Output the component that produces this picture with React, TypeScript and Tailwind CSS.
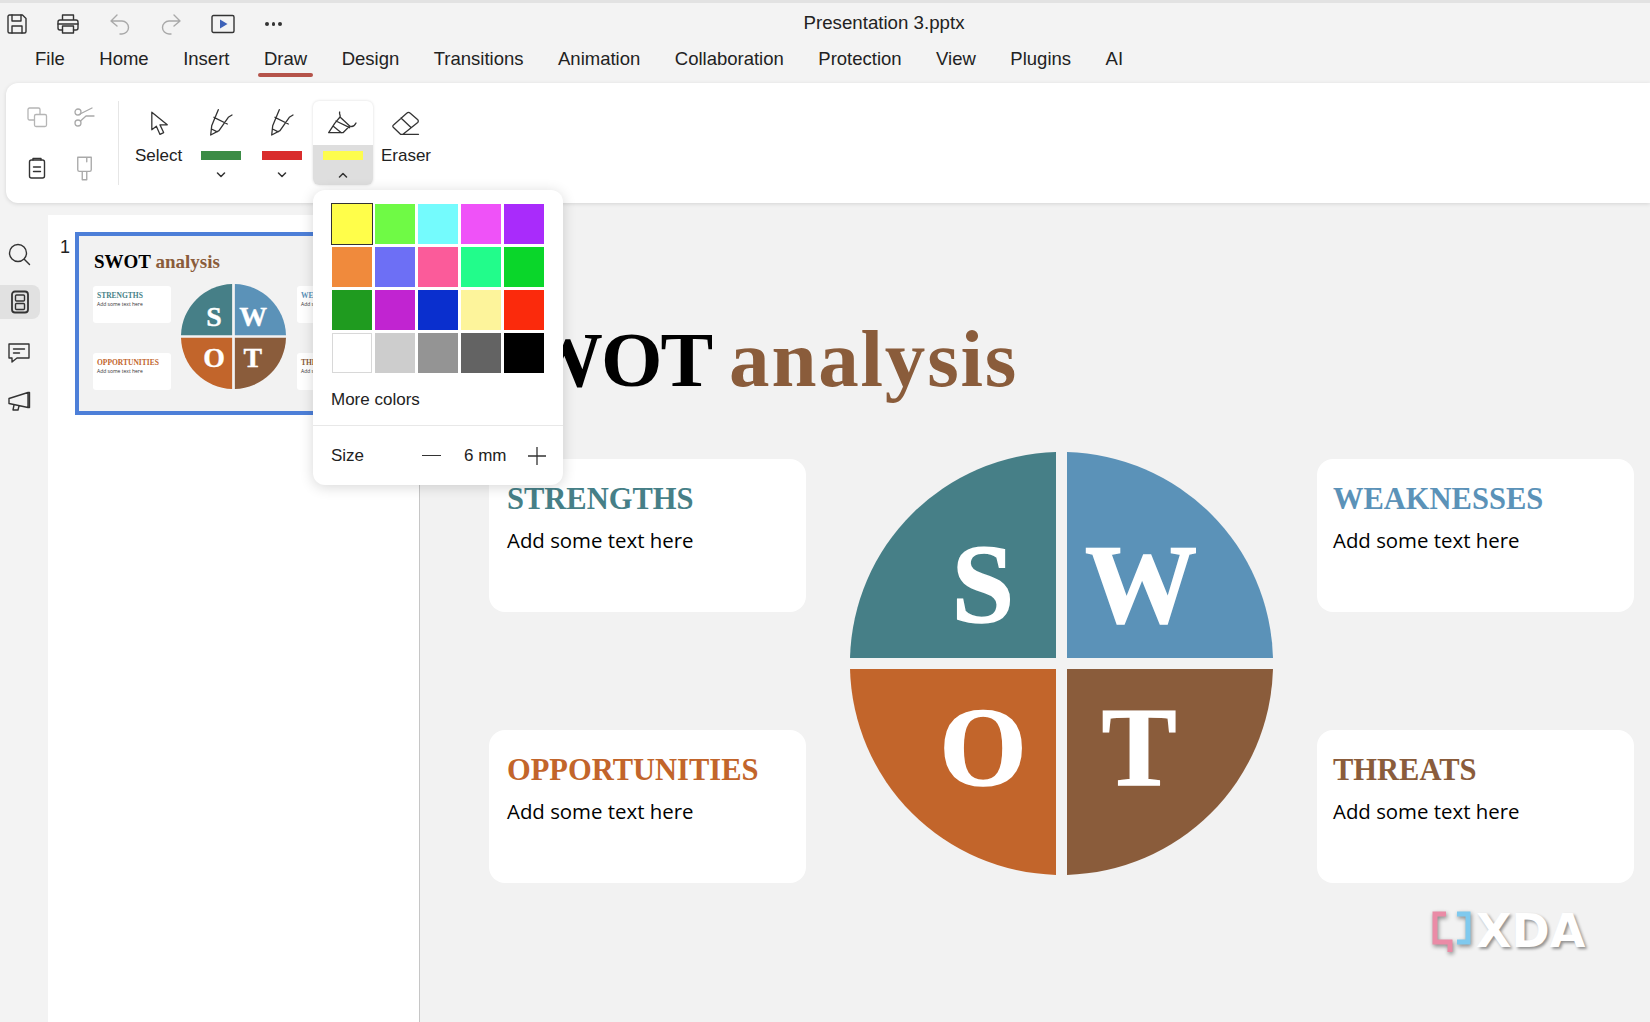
import React from "react";

const SANS = "font-['Liberation_Sans',Arial,sans-serif]";
const tabs = ["File","Home","Insert","Draw","Design","Transitions","Animation","Collaboration","Protection","View","Plugins","AI"];
const swatches = [
  "bg-[#fffe4a]","bg-[#6ffa45]","bg-[#74fbfd]","bg-[#ef52f8]","bg-[#a92bfb]",
  "bg-[#f08a3c]","bg-[#6d6ff5]","bg-[#fb5b9a]","bg-[#22fc8b]","bg-[#0ad62a]",
  "bg-[#1f9b1f]","bg-[#c124d1]","bg-[#0a2fce]","bg-[#fdf49b]","bg-[#fb2a0c]",
  "bg-[#ffffff]","bg-[#cdcdcd]","bg-[#949494]","bg-[#636363]","bg-[#000000]",
];

function I({ size = 24, color = "#333", sw = 1.4, children }: { size?: number; color?: string; sw?: number; children: React.ReactNode }) {
  return (
    <svg width={size} height={size} viewBox="0 0 24 24" fill="none" stroke={color} strokeWidth={sw} strokeLinecap="round" strokeLinejoin="round" className="shrink-0">
      {children}
    </svg>
  );
}
const SaveI = () => <I><path d="M3 4.500A1.500 1.500 0 0 1 4.500 3h13L21 6.500v13a1.500 1.500 0 0 1-1.500 1.500h-15A1.500 1.500 0 0 1 3 19.500z"/><path d="M7 3v6h9V3M7 21v-7h10v7"/></I>;
const PrintI = () => <I><path d="M6.500 8V3h11v5M6.500 18H4a2 2 0 0 1-2-2v-6a2 2 0 0 1 2-2h16a2 2 0 0 1 2 2v6a2 2 0 0 1-2 2h-2.500"/><path d="M6.500 14h11v7h-11zM2 12h20"/></I>;
const UndoI = () => <I color="#a9a9a9"><path d="M9 3 3 9l6 5M3 9h11a6.500 6.500 0 0 1 6.500 6.500A6.500 6.500 0 0 1 14 22h-2"/></I>;
const RedoI = () => <I color="#a9a9a9"><path d="m15 3 6 6-6 5M21 9H10a6.500 6.500 0 0 0-6.500 6.500A6.500 6.500 0 0 0 10 22h2"/></I>;
const PlayI = () => (
  <svg width="24" height="20" viewBox="0 0 24 20" fill="none" className="shrink-0">
    <rect x="1" y="1.500" width="22" height="17" rx="1.500" stroke="#333" strokeWidth="1.400" />
    <path d="M9 5.500 16.500 10 9 14.500z" fill="#3d62b8" />
  </svg>
);
const PenI = () => (
  <svg width="24" height="28" viewBox="0 0 24 28" fill="none" stroke="#333" strokeWidth="1.300" strokeLinejoin="round" strokeLinecap="round" className="shrink-0">
    <path d="M9.300 .7 2.700 16.700 1.700 26 10 21.700 19.300 8.300 23 6M5 8.300 18.300 15M2.500 20 8.300 22.800"/>
  </svg>
);
const HighlightI = () => (
  <svg width="30" height="24" viewBox="0 0 30 24" fill="none" stroke="#333" strokeWidth="1.300" strokeLinejoin="round" strokeLinecap="round" className="shrink-0">
    <path d="M11.700 1c-.8 2 1.200 3.500 .3 5L6.700 12.300 .7 21.700H15L21.700 15c2 1 4.500 .5 6.300-3M12 6l9.700 9M8 10l13.700 6.700M5 15l8.300 6.700"/>
  </svg>
);
const EraserI = () => (
  <svg width="28" height="25" viewBox="0 0 28 25" fill="none" stroke="#333" strokeWidth="1.300" strokeLinejoin="round" strokeLinecap="round" className="shrink-0">
    <path d="M15 2a2 2 0 0 1 3 0l7.500 6.500a2 2 0 0 1 .2 3L11 23.300H8.500L1.500 16.500a1.500 1.500 0 0 1 0-2.500zM9 7l10 9.500M9 23.300H26.500"/>
  </svg>
);
const Chev = ({ up = false }: { up?: boolean }) => (
  <svg width="10" height="6" viewBox="0 0 10 6" fill="none" stroke="#333" strokeWidth="1.500" strokeLinecap="round" strokeLinejoin="round">
    <path d={up ? "M1.500 5 5 1.500 8.500 5" : "M1.500 1 5 4.500 8.500 1"} />
  </svg>
);

function PenTool({ bar, icon }: { bar: string; icon: React.ReactNode }) {
  return (
    <div className="w-[60px] h-[84px] flex flex-col items-center">
      <div className="h-[44px] flex items-center justify-center">{icon}</div>
      <div className={`mt-[6px] w-[40px] h-[9px] ${bar}`} />
      <div className="mt-[12px]"><Chev /></div>
    </div>
  );
}

function Card({ title, color, pad = "pl-[18px]" }: { title: string; color: string; pad?: string }) {
  return (
    <div className={`w-[317px] h-[153px] rounded-[16px] bg-white ${pad} pt-[22px]`}>
      <div className={`font-['Liberation_Serif',serif] font-bold text-[30.500px] leading-[36px] ${color}`}>{title}</div>
      <div className="mt-[8px] font-['Open_Sans',sans-serif] text-[20.400px] leading-[30px] text-black">Add some text here</div>
    </div>
  );
}

function Wheel({ size }: { size: number }) {
  return (
    <svg width={size} height={size} viewBox="0 0 423 423" className="shrink-0">
      <path d="M206 0.100A211.500 211.500 0 0 0 0 206H206Z" fill="#467f87" />
      <path d="M217 0.100A211.500 211.500 0 0 1 423 206H217Z" fill="#5b92b8" />
      <path d="M0 217A211.500 211.500 0 0 0 206 422.900V217Z" fill="#c2652b" />
      <path d="M423 217A211.500 211.500 0 0 1 217 422.900V217Z" fill="#8a5c3b" />
      <g fill="#fff" stroke="#fff" strokeWidth="1.500" fontFamily="'Liberation Serif',serif" fontWeight="700" fontSize="112" textAnchor="middle">
        <text x="133" y="170">S</text>
        <text x="291" y="170">W</text>
        <text x="133" y="333">O</text>
        <text x="289" y="333">T</text>
      </g>
    </svg>
  );
}

function ThumbCol({ items, ml }: { items: string[][]; ml: string }) {
  return (
    <div className={`flex flex-col gap-[30px] w-[78px] mt-[2px] ${ml}`}>
      {items.map(([t, c]) => (
        <div key={t} className="h-[37px] bg-white rounded-[3px] pl-[4px] pt-[5px]">
          <div className={`font-['Liberation_Serif',serif] font-bold text-[7.500px] leading-[9px] ${c}`}>{t}</div>
          <div className="font-['Open_Sans',sans-serif] text-[5px] leading-[9px] text-[#333]">Add some text here</div>
        </div>
      ))}
    </div>
  );
}

function Thumb() {
  return (
    <div className="w-[330px] h-[183px] border-[4px] border-[#4d7fd8] bg-[#f2f2f2] pl-[15px] pt-[14px]">
      <div className="font-['Liberation_Serif',serif] font-bold text-[19px] leading-[24px] text-black">
        SWOT <span className="text-[#8a5c3b]">analysis</span>
      </div>
      <div className="flex items-start mt-[10px] -ml-[1px]">
        <ThumbCol ml="" items={[["STRENGTHS","text-[#467f87]"],["OPPORTUNITIES","text-[#c2652b]"]]} />
        <div className="ml-[10px]"><Wheel size={105} /></div>
        <ThumbCol ml="ml-[11px]" items={[["WEAKNESSES","text-[#5b92b8]"],["THREATS","text-[#8a5c3b]"]]} />
      </div>
    </div>
  );
}

export default function App() {
  return (
    <div className={`relative w-[1650px] h-[1022px] overflow-hidden bg-[#f3f3f3] text-[#222] ${SANS} flex flex-col`}>
      {/* window tab strip */}
      <div className="absolute top-0 left-0 w-full h-[3px] flex">
        <span className="w-[107px] border-r border-[#b8b8b8]" />
        <span className="w-[157px] border-r border-[#b8b8b8]" />
        <span className="w-[192px] border-r border-[#b8b8b8]" />
        <span className="w-[193px] border-r border-[#b8b8b8]" />
        <span className="w-[194px] border-r border-[#b8b8b8]" />
      </div>
      {/* quick access row */}
      <div className="h-[45px] shrink-0 relative flex items-center pl-[5px] border-t-[3px] border-[#e2e2e2]">
        <div className="flex items-center">
          <div className="w-[51px]"><SaveI /></div>
          <div className="w-[52px]"><PrintI /></div>
          <div className="w-[51px]"><UndoI /></div>
          <div className="w-[52px]"><RedoI /></div>
          <div className="w-[51px]"><PlayI /></div>
          <div className="flex gap-[3px] ml-[3px]">
            <span className="w-[3.500px] h-[3.500px] rounded-full bg-[#333]" />
            <span className="w-[3.500px] h-[3.500px] rounded-full bg-[#333]" />
            <span className="w-[3.500px] h-[3.500px] rounded-full bg-[#333]" />
          </div>
        </div>
        <div className="absolute left-0 right-0 top-0 text-center pl-[118px] text-[18.700px] leading-[40px] text-[#222]">Presentation 3.pptx</div>
      </div>

      {/* tabs */}
      <div className="h-[38px] shrink-0 flex items-start gap-[34.500px] pl-[35px] pt-[1px] text-[18.500px] leading-[26px]">
        {tabs.map((t) => (
          <div key={t} className="relative">
            {t}
            {t === "Draw" && <div className="absolute left-[-6px] right-[-6px] top-[27px] h-[4px] rounded-full bg-[#b5534a]" />}
          </div>
        ))}
      </div>

      {/* ribbon */}
      <div className="h-[120px] shrink-0 ml-[6px] bg-white rounded-l-[12px] shadow-[0_1px_4px_rgba(0,0,0,0.12)] flex items-start relative z-10 pt-[18px]">
        <div className="w-[112px] h-[84px] grid grid-cols-2 grid-rows-[32px_32px] gap-y-[19px] items-center justify-items-center pl-[7px] pr-[10px]">
          <I color="#b5b5b5" sw={1.300}><rect x="3" y="3" width="12" height="12" rx="1.500"/><rect x="9.500" y="9.500" width="12" height="12" rx="1.500" fill="#fff"/></I>
          <I color="#a9a9a9" sw={1.300}><circle cx="6" cy="7" r="3"/><circle cx="6" cy="18" r="3"/><path d="M8 9 20 3M8.500 16 14 11M14 11h8"/></I>
          <I color="#333"><rect x="4.500" y="4" width="15" height="18" rx="2"/><path d="M8 4V2.500h8V4M8.500 11h7M8.500 15.500h7"/></I>
          <I size={27} color="#a9a9a9" sw={1.200}><path d="M6 2h12v11a1.500 1.500 0 0 1-1.500 1.500h-9A1.500 1.500 0 0 1 6 13zM10 14.500V22h4v-7.500M14 2v4"/></I>
        </div>
        <div className="w-px h-[84px] bg-[#e6e6e6]" />
        <div className="w-[71px] ml-[4px] h-[84px] flex flex-col items-center">
          <div className="h-[44px] flex items-center justify-center pl-[3px]">
            <svg width="20" height="29" viewBox="0 0 22 28" fill="none" stroke="#333" strokeWidth="1.400" strokeLinejoin="round" className="shrink-0">
              <path d="M2 1.500 2 21l5-4 4 9 4-2-4-8.500h8z"/>
            </svg>
          </div>
          <div className="text-[17px] leading-[20px] mt-[1px]">Select</div>
        </div>
        <div className="-ml-[3px] flex">
          <div className="mr-[-2px]"><PenTool bar="bg-[#3c8c46]" icon={<PenI />} /></div>
          <div className="ml-[3px]"><PenTool bar="bg-[#d92c2c]" icon={<PenI />} /></div>
        </div>
        <div className="w-[60px] h-[84px] ml-[1px] flex flex-col items-center rounded-[6px] shadow-[0_0_3px_rgba(0,0,0,0.15)] overflow-hidden">
          <div className="h-[44px] w-full flex items-center justify-center"><HighlightI /></div>
          <div className="flex-1 w-full bg-[#dedede] flex flex-col items-center pt-[6px]">
            <div className="w-[40px] h-[9px] bg-[#fdfc4e]" />
            <div className="mt-[12px]"><Chev up /></div>
          </div>
        </div>
        <div className="ml-[7px] w-[52px] h-[84px] flex flex-col items-center">
          <div className="h-[44px] flex items-center justify-center"><EraserI /></div>
          <div className="text-[17px] leading-[20px] mt-[1px]">Eraser</div>
        </div>
      </div>

      {/* body */}
      <div className="flex-1 flex min-h-0">
        <div className="w-[48px] shrink-0 flex flex-col pt-[34px]">
          <div className="h-[34px] flex items-center pl-[7px]">
            <svg width="24" height="24" viewBox="0 0 24 24" fill="none" stroke="#333" strokeWidth="1.400" strokeLinecap="round"><circle cx="11" cy="11" r="8.500"/><path d="m17.500 17.500 5 5"/></svg>
          </div>
          <div className="mt-[14px] h-[34px] w-[40px] bg-[#e1e1e1] rounded-r-[8px] flex items-center justify-center">
            <I><rect x="4" y="1.500" width="16" height="21" rx="3" strokeWidth="1.800"/><rect x="7.500" y="5" width="9" height="6" rx="1"/><rect x="7.500" y="13.500" width="9" height="6" rx="1"/></I>
          </div>
          <div className="mt-[18px] h-[30px] flex items-center pl-[7px]">
            <I><path d="M2 4h20v14H10l-5 4v-4H2z"/><path d="M6.500 9h11M6.500 13h6"/></I>
          </div>
          <div className="mt-[19px] h-[30px] flex items-center pl-[7px]">
            <I><path d="M2 9.500 21 3.500v15L2 14.500zM21 3.500h1.500v15H21M7 16l-1 5 5 0 1-4"/></I>
          </div>
        </div>

        <div className="w-[372px] shrink-0 mt-[12px] bg-white border-r border-[#c6c6c6] flex items-start overflow-hidden pt-[17px] pl-[12px]">
          <div className="w-[15px] text-[18px] leading-[30px] text-[#222]">1</div>
          <div className="shrink-0"><Thumb /></div>
        </div>

        <div className="flex-1 min-w-0 bg-[#f2f2f2] pl-[62px] pt-[112px] overflow-hidden">
          <div className="flex items-baseline gap-[18px] font-['Liberation_Serif',serif] font-bold text-[79px] leading-[88px] whitespace-nowrap">
            <span className="text-black tracking-[-2px]">SWOT</span>
            <span className="text-[#8a5c3b] text-[81px] tracking-[1.800px]">analysis</span>
          </div>
          <div className="mt-[48px] ml-[7px] flex items-start gap-[44px]">
            <div className="flex flex-col gap-[118px] mt-[7px]">
              <Card title="STRENGTHS" color="text-[#467f87]" />
              <Card title="OPPORTUNITIES" color="text-[#c2652b]" />
            </div>
            <Wheel size={423} />
            <div className="flex flex-col gap-[118px] mt-[7px]">
              <Card title="WEAKNESSES" color="text-[#5b92b8]" pad="pl-[16px]" />
              <Card title="THREATS" color="text-[#8a5c3b]" pad="pl-[16px]" />
            </div>
          </div>
        </div>
      </div>

      {/* colour popover */}
      <div className="absolute z-20 left-[313px] top-[190px] w-[250px] h-[295px] bg-white rounded-[12px] shadow-[0_2px_14px_rgba(0,0,0,0.16)]">
        <div className="grid grid-cols-5 gap-[3px] pl-[19px] pt-[14px] w-fit">
          {swatches.map((s, i) => (
            <div key={s} className={`w-[40px] h-[40px] ${s} ${i === 0 ? "outline-[1.500px] outline-[#333]" : i === 15 ? "border border-[#d8d8d8]" : ""}`} />
          ))}
        </div>
        <div className="pl-[18px] mt-[15px] text-[17px] leading-[24px] text-[#222]">More colors</div>
        <div className="mt-[13px] border-t border-[#e8e8e8] h-[60px] flex items-center pl-[18px] text-[17px] text-[#222]">
          <span className="w-[91px]">Size</span>
          <span className="w-[19px] h-[1.500px] bg-[#333]" />
          <span className="ml-[23px]">6 mm</span>
          <span className="ml-[20px]">
            <svg width="20" height="20" viewBox="0 0 20 20" stroke="#333" strokeWidth="1.300"><path d="M1 10h18M10 1v18"/></svg>
          </span>
        </div>
      </div>

      {/* watermark */}
      <div className="absolute z-20 left-[1432px] top-[909px] flex items-start gap-[2px]">
        <svg width="42" height="52" viewBox="0 0 42 52" fill="none" className="drop-shadow-[1px_2px_2px_rgba(0,0,0,0.45)]">
          <path d="M14 5H3v28h8l7 0v10" stroke="#ea8ba6" strokeWidth="5"/>
          <path d="M25 5h11v28H25" stroke="#7fc9ee" strokeWidth="5"/>
        </svg>
        <div className="font-['DejaVu_Sans',sans-serif] font-bold text-[46px] leading-[44px] text-white [text-shadow:2px_2px_3px_rgba(0,0,0,0.4)]">XDA</div>
      </div>
    </div>
  );
}
